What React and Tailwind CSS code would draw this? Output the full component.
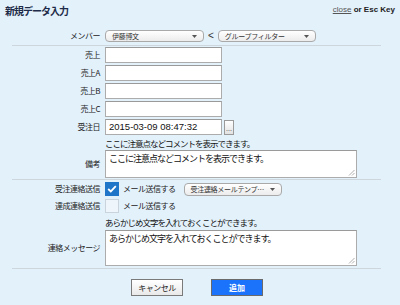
import React from "react";

function Arrow() {
  return (
    <svg width="5" height="3" viewBox="0 0 5 3" className="shrink-0">
      <path d="M0 0 L5 0 L2.5 3 Z" fill="#555" />
    </svg>
  );
}

function Sel({ className, text }) {
  return (
    <div
      className={
        "flex items-center justify-between rounded-[4px] border border-[#a9a9a9] bg-gradient-to-b from-white to-[#ececec] pl-[6px] pr-[6px] " +
        className
      }
    >
      <span className="text-[7px] leading-none text-[#333] tracking-[-0.3px]">{text}</span>
      <Arrow />
    </div>
  );
}

function Label({ children }) {
  return (
    <div className="w-[100px] shrink-0 text-right text-[8px] leading-none tracking-[-0.5px] text-[#222]">
      {children}
    </div>
  );
}

function InputRow({ label, value }) {
  return (
    <div className="flex h-[16px] items-center">
      <Label>{label}</Label>
      <div className="ml-[5px] flex h-[16px] w-[117px] items-center border border-[#acacac] border-t-[#9a9a9a] bg-white pl-[3px] font-['Liberation_Sans',sans-serif] text-[9.5px] leading-none text-[#111]">
        {value}
      </div>
    </div>
  );
}

function Handle() {
  return (
    <svg width="7" height="7" viewBox="0 0 7 7" className="absolute bottom-[1px] right-[1px]">
      <path d="M6.5 1 L1 6.5 M6.5 4 L4 6.5" stroke="#9a9a9a" strokeWidth="0.8" />
    </svg>
  );
}

function TextArea({ className, text }) {
  return (
    <div
      className={
        "relative ml-[5px] w-[252px] border border-[#acacac] border-t-[#9a9a9a] bg-white pl-[3px] pt-[2px] text-[9px] leading-[11px] tracking-[-1px] text-[#111] " +
        className
      }
    >
      {text}
      <Handle />
    </div>
  );
}

function Check() {
  return (
    <div className="flex h-[14px] w-[14px] items-center justify-center bg-[#1f75c7]">
      <svg width="10" height="8" viewBox="0 0 10 8">
        <path d="M1.2 4 L3.8 6.4 L8.8 1.2" fill="none" stroke="white" strokeWidth="1.8" />
      </svg>
    </div>
  );
}

export default function App() {
  return (
    <div className="h-[305px] w-[400px] overflow-hidden bg-[#e3f1fb] font-['Noto_Sans_CJK_JP',sans-serif] text-[#222]">
      <div className="flex h-[30px] items-start justify-between px-[5px] pt-[5px]">
        <div className="text-[10px] font-bold leading-[11px] tracking-[-1px] text-[#1d2b48]">
          新規データ入力
        </div>
        <div className="pt-[1px] font-['Liberation_Sans',sans-serif] text-[8px] leading-none">
          <span className="text-[#555] underline">close</span>
          <span className="font-bold text-[#222]"> or Esc Key</span>
        </div>
      </div>

      <div className="flex h-[12px] items-center">
        <Label>メンバー</Label>
        <Sel className="ml-[5px] h-[12px] w-[99px]" text="伊藤博文" />
        <span className="mx-[4px] font-['Liberation_Sans',sans-serif] text-[10px] leading-none text-[#333]">&lt;</span>
        <Sel className="h-[12px] w-[98px]" text="グループフィルター" />
      </div>

      <div className="ml-[12px] mt-[3px] h-px w-[369px] bg-[#cdd6dc]" />

      <div className="mt-[1px] flex flex-col gap-[2px]">
        <InputRow label="売上" value="" />
        <InputRow label="売上A" value="" />
        <InputRow label="売上B" value="" />
        <InputRow label="売上C" value="" />
        <div className="flex h-[16px] items-center">
          <Label>受注日</Label>
          <div className="ml-[5px] flex h-[16px] w-[117px] items-center border border-[#acacac] border-t-[#9a9a9a] bg-white pl-[3px] font-['Liberation_Sans',sans-serif] text-[9.5px] leading-none text-[#111]">
            2015-03-09 08:47:32
          </div>
          <div className="ml-[2px] flex h-[15px] w-[10px] items-end justify-center border border-[#9a9a9a] bg-gradient-to-b from-white to-[#e2e2e2] pb-[2px] font-['Liberation_Sans',sans-serif] text-[7px] leading-none text-[#333]">
            ...
          </div>
        </div>
      </div>

      <div className="mt-[2px] flex h-[12px] items-center pl-[105px] text-[8.5px] leading-none tracking-[-1px] text-[#111]">
        ここに注意点などコメントを表示できます。
      </div>

      <div className="mt-[1px] flex h-[28px] items-center">
        <Label>備考</Label>
        <TextArea className="h-[28px]" text="ここに注意点などコメントを表示できます。" />
      </div>

      <div className="ml-[12px] mt-[1px] h-px w-[369px] bg-[#cdd6dc]" />

      <div className="mt-[2px] flex h-[14px] items-center">
        <Label>受注連絡送信</Label>
        <div className="ml-[5px]">
          <Check />
        </div>
        <span className="ml-[4px] text-[8px] leading-none tracking-[-0.5px] text-[#222]">メール送信する</span>
        <Sel className="ml-[8px] h-[13px] w-[98px]" text="受注連絡メールテンプ…" />
      </div>

      <div className="mt-[3px] flex h-[14px] items-center">
        <Label>達成連絡送信</Label>
        <div className="ml-[5px] h-[14px] w-[14px] border border-[#c9d3dc] bg-[#eef6fc]" />
        <span className="ml-[4px] text-[8px] leading-none tracking-[-0.5px] text-[#222]">メール送信する</span>
      </div>

      <div className="mt-[3px] flex h-[12px] items-center pl-[105px] text-[8.5px] leading-none tracking-[-1px] text-[#111]">
        あらかじめ文字を入れておくことができます。
      </div>

      <div className="mt-[2px] flex h-[36px] items-center">
        <Label>連絡メッセージ</Label>
        <TextArea className="h-[36px]" text="あらかじめ文字を入れておくことができます。" />
      </div>

      <div className="ml-[12px] mt-[2px] h-px w-[369px] bg-[#cdd6dc]" />

      <div className="mt-[10px] flex items-center pl-[131px]">
        <div className="flex h-[17px] w-[52px] items-center justify-center border border-[#7a7a7a] bg-gradient-to-b from-white to-[#e9e9e9] text-[8px] leading-none tracking-[-0.5px] text-[#222]">
          キャンセル
        </div>
        <div className="ml-[28px] flex h-[17px] w-[52px] items-center justify-center border border-[#6a6a6a] bg-[#1c73fb] text-[8px] font-bold leading-none text-white">
          追加
        </div>
      </div>
    </div>
  );
}
